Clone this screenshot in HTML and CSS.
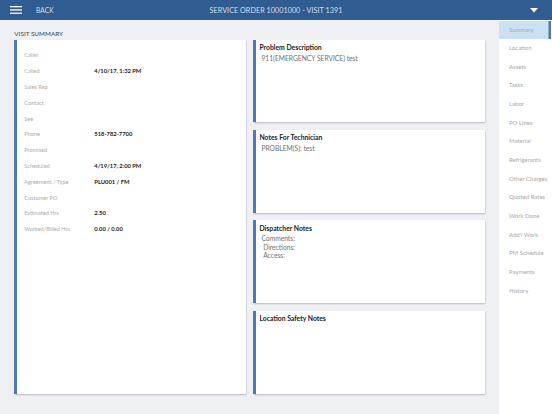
FILE: index.html
```html
<!DOCTYPE html>
<html>
<head>
<meta charset="utf-8">
<link rel="stylesheet" href="styles.css">
</head>
<body>
<header class="topbar">
  <div class="topbar-left">
    <svg class="menu-icon" width="12" height="8" viewBox="0 0 12 8"><rect x="0" y="0" width="12" height="1.3" fill="#fff"/><rect x="0" y="3.3" width="12" height="1.3" fill="#fff"/><rect x="0" y="6.6" width="12" height="1.3" fill="#fff"/></svg>
    <span class="back">BACK</span>
  </div>
  <div class="title">SERVICE ORDER 10001000 - VISIT 1391</div>
  <div class="topbar-right">
    <svg width="8" height="5" viewBox="0 0 8 5"><polygon points="0,0 8,0 4,4.5" fill="#fff"/></svg>
  </div>
</header>
<div class="main">
  <div class="content">
    <div class="section-title">VISIT SUMMARY</div>
    <div class="cards">
      <div class="card summary-card">
        <div class="row"><span class="label">Caller</span><span class="value"></span></div>
        <div class="row"><span class="label">Called</span><span class="value">4/10/17, 1:32 PM</span></div>
        <div class="row"><span class="label">Sales Rep</span><span class="value"></span></div>
        <div class="row"><span class="label">Contact</span><span class="value"></span></div>
        <div class="row"><span class="label">See</span><span class="value"></span></div>
        <div class="row"><span class="label">Phone</span><span class="value">518-782-7700</span></div>
        <div class="row"><span class="label">Promised</span><span class="value"></span></div>
        <div class="row"><span class="label">Scheduled</span><span class="value">4/19/17, 2:00 PM</span></div>
        <div class="row"><span class="label">Agreement / Type</span><span class="value">PLU001 / FM</span></div>
        <div class="row"><span class="label">Customer PO</span><span class="value"></span></div>
        <div class="row"><span class="label">Estimated Hrs</span><span class="value">2.50</span></div>
        <div class="row"><span class="label">Worked/Billed Hrs</span><span class="value">0.00 / 0.00</span></div>
      </div>
      <div class="notes">
        <div class="card note-card">
          <div class="note-title">Problem Description</div>
          <div class="note-body">911(EMERGENCY SERVICE) test</div>
        </div>
        <div class="card note-card">
          <div class="note-title">Notes For Technician</div>
          <div class="note-body">PROBLEM(S): test</div>
        </div>
        <div class="card note-card">
          <div class="note-title">Dispatcher Notes</div>
          <div class="note-body pre">Comments:
 Directions:
 Access:</div>
        </div>
        <div class="card note-card">
          <div class="note-title">Location Safety Notes</div>
        </div>
      </div>
    </div>
  </div>
  <nav class="sidebar">
    <div class="nav-item active">Summary</div>
    <div class="nav-item">Location</div>
    <div class="nav-item">Assets</div>
    <div class="nav-item">Tasks</div>
    <div class="nav-item">Labor</div>
    <div class="nav-item">PO Lines</div>
    <div class="nav-item">Material</div>
    <div class="nav-item">Refrigerants</div>
    <div class="nav-item">Other Charges</div>
    <div class="nav-item">Quoted Rates</div>
    <div class="nav-item">Work Done</div>
    <div class="nav-item">Add'l Work</div>
    <div class="nav-item">PM Schedule</div>
    <div class="nav-item">Payments</div>
    <div class="nav-item">History</div>
  </nav>
</div>
</body>
</html>
```

FILE: styles.css
```css
html, body {
  margin: 0;
  padding: 0;
}
body {
  width: 552px;
  height: 414px;
  overflow: hidden;
  font-family: Lato, "Open Sans", sans-serif;
  background: #eef0f4;
  display: flex;
  flex-direction: column;
}
.topbar {
  height: 20px;
  background: #305c92;
  color: rgba(255, 255, 255, 0.8);
  display: grid;
  grid-template-columns: 1fr auto 1fr;
  align-items: center;
  flex: none;
}
.topbar-left {
  display: flex;
  align-items: center;
  padding-left: 10px;
}
.menu-icon {
  display: block;
  margin-right: 14px;
}
.back {
  font-size: 6.6px;
  letter-spacing: 0.1px;
}
.title {
  font-size: 7.2px;
  letter-spacing: 0.05px;
}
.topbar-right {
  display: flex;
  justify-content: flex-end;
  padding-right: 14px;
}
.topbar-right svg {
  display: block;
}
.main {
  flex: 1;
  display: flex;
  min-height: 0;
}
.content {
  width: 499px;
  box-sizing: border-box;
  padding: 8px 13.7px 0 14.3px;
}
.section-title {
  font-size: 6.4px;
  color: #444;
  height: 11.5px;
  line-height: 11px;
}
.cards {
  display: grid;
  grid-template-columns: 1fr 1fr;
  column-gap: 7.3px;
  height: 354px;
}
.card {
  background: #fff;
  border-left: 3px solid #4b7ab8;
  box-shadow: 0.5px 1px 1.5px rgba(0, 0, 0, 0.28);
  box-sizing: border-box;
}
.summary-card {
  padding: 7.6px 0 0 7px;
}
.row {
  display: flex;
  height: 15.8px;
  align-items: center;
}
.label {
  width: 70px;
  font-size: 5.6px;
  color: #ababab;
}
.value {
  font-size: 5.8px;
  font-weight: bold;
  color: #222;
}
.notes {
  display: grid;
  grid-template-rows: repeat(4, 1fr);
  row-gap: 7.7px;
}
.note-card {
  padding: 3.5px 0 0 3px;
}
.note-title {
  font-size: 6.8px;
  font-weight: bold;
  color: #1a1a1a;
  line-height: 9px;
}
.note-body {
  font-size: 6.7px;
  color: #707070;
  line-height: 8.4px;
  padding-left: 2px;
  margin-top: 1.5px;
}
.note-body.pre {
  white-space: pre-wrap;
}
.sidebar {
  flex: 1;
  background: #fff;
  padding-top: 0.5px;
}
.nav-item {
  height: 18.67px;
  line-height: 18.67px;
  padding-left: 10px;
  font-size: 6px;
  color: #a8a8a8;
  white-space: nowrap;
}
.nav-item.active {
  background: #cbe0f1;
  box-shadow: inset -2.5px 0 0 #4b7ab8;
  margin-right: 1.5px;
}
```
